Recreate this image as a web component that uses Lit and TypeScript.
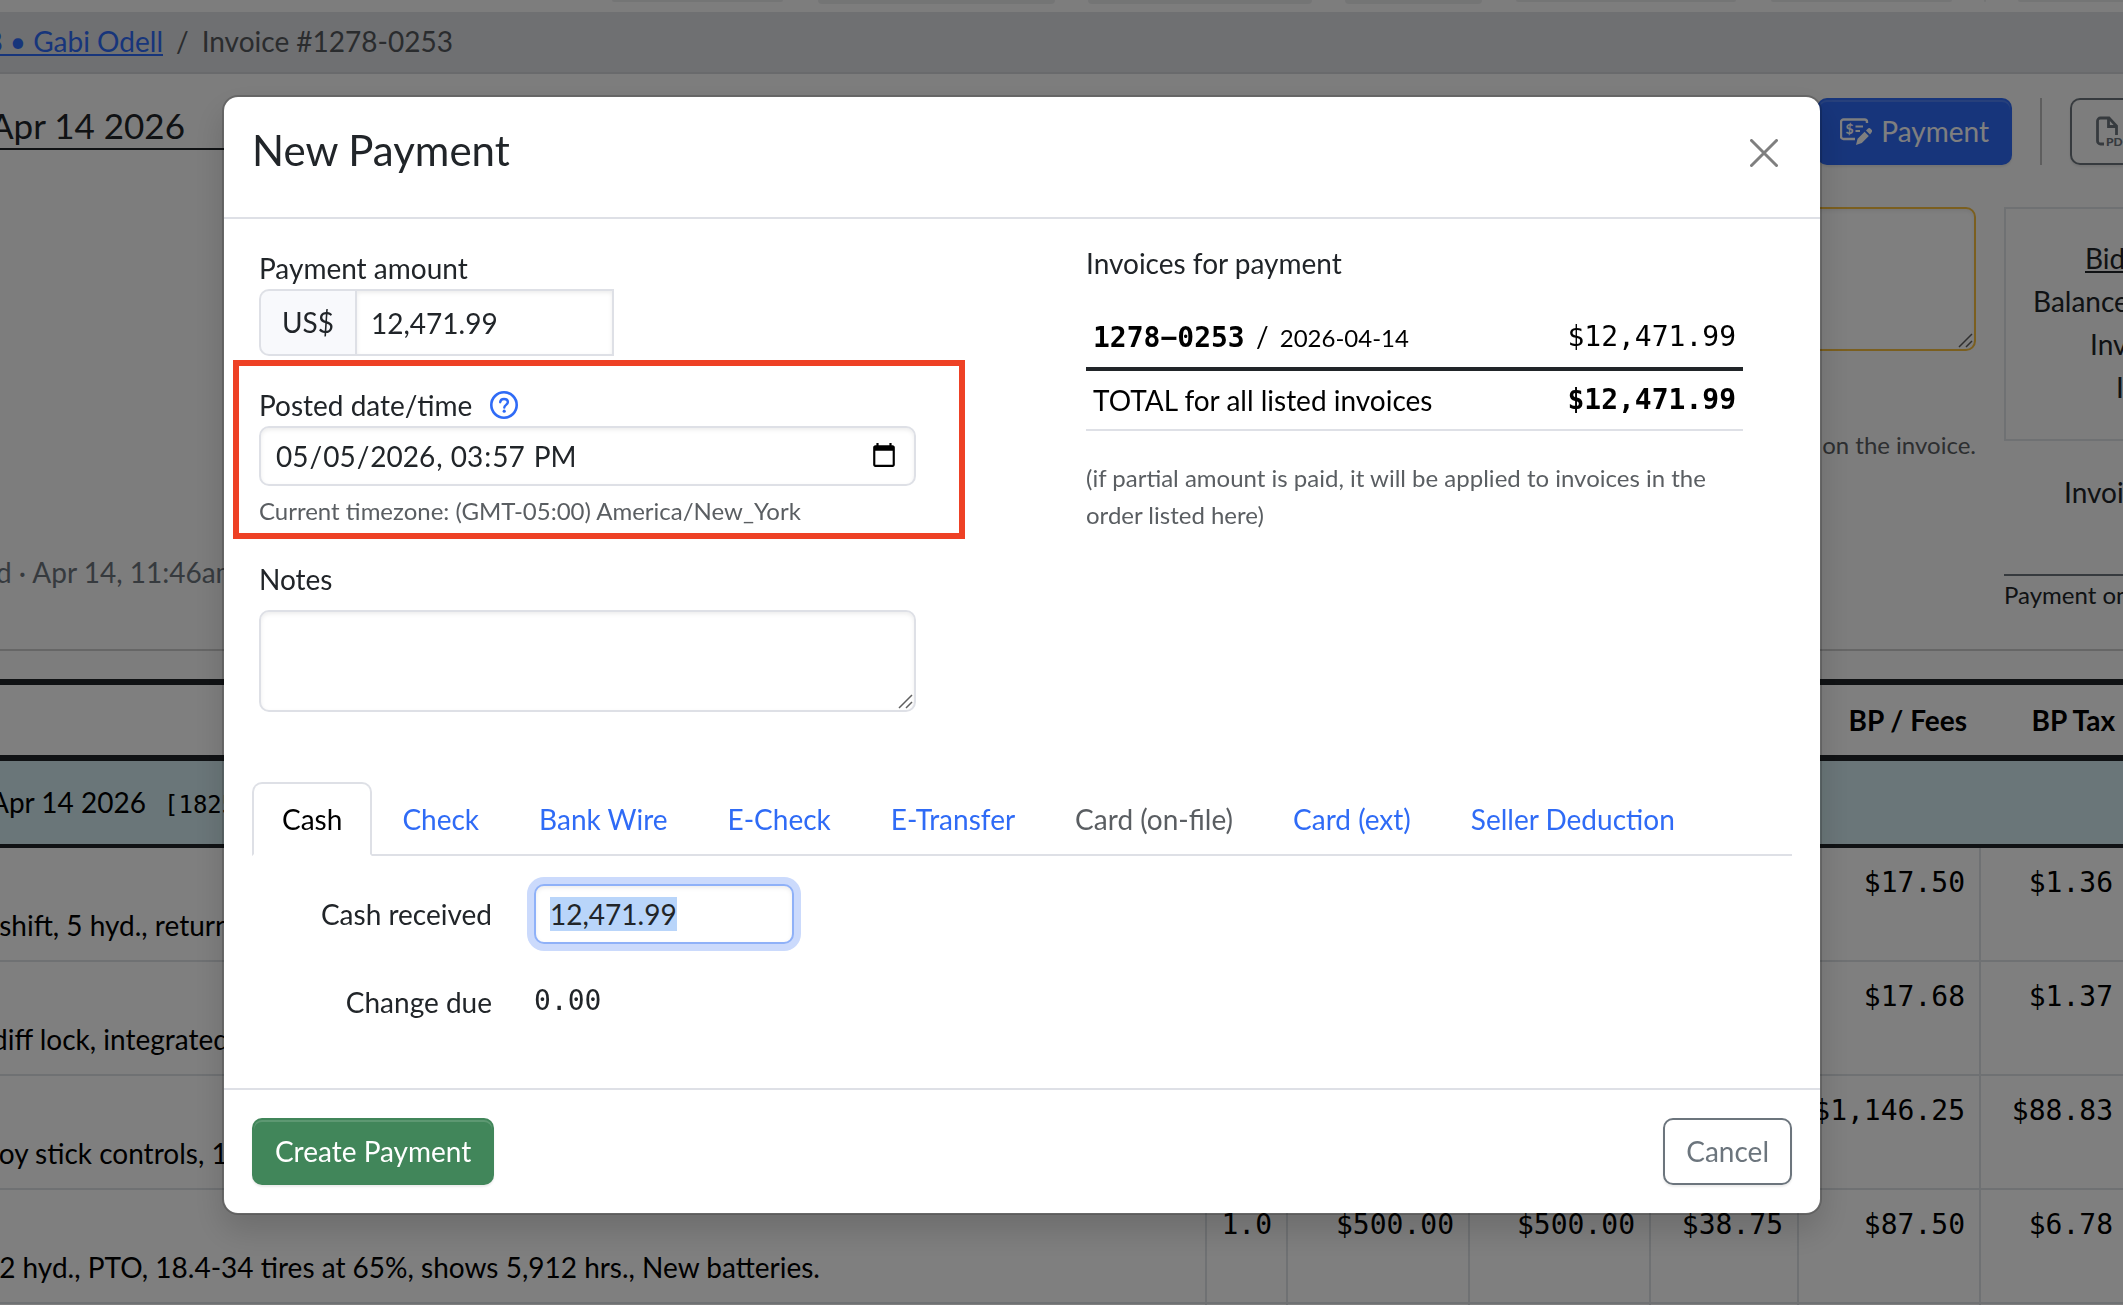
import { LitElement, html, css } from "lit";
import { customElement, query, state } from "lit/decorators.js";
import { classMap } from "lit/directives/class-map.js";
import { styleMap } from "lit/directives/style-map.js";

interface LotRow {
  description: string;
  cells: string[];
}

const LOTS: LotRow[] = [
  { description: "\u00a0shift, 5 hyd., return", cells: ["", "", "", "", "$17.50", "$1.36"] },
  { description: "diff lock, integrated", cells: ["", "", "", "", "$17.68", "$1.37"] },
  { description: "joy stick controls, 19", cells: ["", "", "", "", "$1,146.25", "$88.83"] },
  {
    description: "\u00a02 hyd., PTO, 18.4-34 tires at 65%, shows 5,912 hrs., New batteries.",
    cells: ["1.0", "$500.00", "$500.00", "$38.75", "$87.50", "$6.78"],
  },
  { description: "", cells: ["", "", "", "", "", ""] },
];

const SUMMARY = [
  { label: "Bid", inset: 79, link: true },
  { label: "Balance", inset: 27, link: false },
  { label: "Inv", inset: 84, link: false },
  { label: "I", inset: 110, link: false },
];

const TOOLBAR = [
  { gap: 612, width: 171, height: 2 },
  { gap: 35, width: 237, height: 4 },
  { gap: 33, width: 224, height: 4 },
  { gap: 33, width: 137, height: 4 },
  { gap: 34, width: 220, height: 2 },
  { gap: 35, width: 181, height: 2 },
  { gap: 32, width: 2, height: 2 },
  { gap: 32, width: 120, height: 2 },
];

const METHODS = [
  { name: "Cash" },
  { name: "Check" },
  { name: "Bank Wire" },
  { name: "E-Check" },
  { name: "E-Transfer" },
  { name: "Card (on-file)", disabled: true },
  { name: "Card (ext)" },
  { name: "Seller Deduction" },
];

const base = css`
  * {
    box-sizing: border-box;
  }
  button,
  input,
  textarea {
    font: inherit;
    color: inherit;
    margin: 0;
  }
  button {
    cursor: pointer;
  }
  svg {
    flex: none;
  }
  .btn {
    display: inline-flex;
    align-items: center;
    gap: 9px;
    padding: 11px 21px;
    line-height: 41px;
    border: 2px solid transparent;
    border-radius: 10px;
    white-space: nowrap;
  }
  .solid {
    color: #fff;
    box-shadow: inset 0 2px 0 rgba(255, 255, 255, 0.15), 0 2px 2px rgba(0, 0, 0, 0.075);
  }
  .outline {
    background: transparent;
    color: #6c757d;
    border-color: #6c757d;
    box-shadow: 0 2px 2px rgba(0, 0, 0, 0.075);
  }
  .mono {
    font-family: "DejaVu Sans Mono", "Liberation Mono", monospace;
  }
  .area {
    position: relative;
    display: block;
  }
  .area textarea {
    display: block;
    width: 100%;
    resize: none;
    outline: none;
    background: #fff;
    border: 2px solid #dee2e6;
    border-radius: 10px;
    padding: 7px 14px;
    box-shadow: inset 0 2px 4px rgba(0, 0, 0, 0.075);
  }
  .grip {
    position: absolute;
    right: 3px;
    bottom: 3px;
    width: 16px;
    height: 16px;
    pointer-events: none;
  }
`;

const grip = html`<svg class="grip" viewBox="0 0 16 16" aria-hidden="true">
  <path d="M2 15 15 2M9 15l6-6" fill="none" stroke="#5f5f5f" stroke-width="1.5" />
</svg>`;

@customElement("invoice-page")
export class InvoicePage extends LitElement {
  static styles = [
    base,
    css`
      :host {
        display: block;
        background: #fafafa;
      }
      .toolbar {
        display: flex;
        align-items: flex-start;
        height: 12px;
        overflow: hidden;
      }
      .tool {
        flex: none;
        background: #e9eaeb;
        border-radius: 0 0 8px 8px;
      }
      .crumbs {
        display: flex;
        gap: 13px;
        height: 62px;
        line-height: 42px;
        padding: 8px 0;
        background: #dee0e4;
        border-bottom: 2px solid #d2d4d8;
        color: #55585c;
      }
      .crumbs a {
        display: flex;
        justify-content: flex-end;
        flex: 0 0 163px;
        overflow: hidden;
        white-space: nowrap;
        color: #2f6bf6;
      }
      .head {
        padding: 24px 0 36px;
        border-bottom: 2px solid #cdcdcd;
        overflow: hidden;
      }
      .title-row {
        display: flex;
        align-items: flex-start;
        justify-content: space-between;
      }
      .date {
        flex: 0 1 600px;
        margin: 0;
        padding-top: 4px;
        font-size: 35px;
        font-weight: 400;
        line-height: 46px;
        border-bottom: 2px solid #212529;
        text-indent: -10px;
      }
      .actions {
        display: flex;
        gap: 28px;
        flex: none;
      }
      .primary {
        background: #2f6bf6;
      }
      .rule {
        width: 2px;
        background: #bcbcbc;
      }
      .pdf {
        width: 53px;
        padding-left: 24px;
        padding-right: 0;
        border-right: 0;
        border-radius: 10px 0 0 10px;
        overflow: hidden;
      }
      .info {
        display: flex;
        gap: 28px;
        margin-top: 42px;
      }
      .status {
        flex: 1;
        align-self: flex-end;
        padding-bottom: 20px;
        line-height: 42px;
        color: #6c757d;
        text-indent: -4px;
      }
      .memo {
        flex: 0 1 600px;
      }
      .memo textarea {
        height: 144px;
        border-color: #f6be3e;
      }
      .memo p {
        margin: 75px 0 0;
        font-size: 24px;
        line-height: 37px;
        text-align: right;
        color: #5a5e62;
      }
      .side {
        flex: 0 0 119px;
        overflow: hidden;
        white-space: nowrap;
      }
      .panel {
        padding: 28px 0 30px;
        border: 2px solid #dee2e6;
        border-right: 0;
        line-height: 43px;
      }
      .panel a {
        color: inherit;
      }
      .invoiced {
        margin-top: 30px;
        padding-left: 60px;
        line-height: 42px;
      }
      .order {
        margin-top: 61px;
        border-top: 2px solid #6c757d;
        font-size: 24px;
        line-height: 37px;
      }
      .lots {
        width: calc(100% + 6px);
        margin-top: 28px;
        table-layout: fixed;
        border-spacing: 0;
        line-height: 42px;
        color: #000;
        background: #fff;
      }
      th,
      td {
        padding: 14px 14px 14px 0;
        text-align: right;
        vertical-align: top;
        white-space: nowrap;
      }
      thead th {
        height: 82px;
        font-weight: 700;
        border-top: 6px solid #212529;
        border-bottom: 6px solid #212529;
      }
      .band td {
        height: 87px;
        padding: 20px 0;
        text-align: left;
        text-indent: -10px;
        background: #d5edf3;
        border-bottom: 4px solid #212529;
      }
      .band .mono {
        font-size: 24px;
        line-height: 24px;
        margin-left: 18px;
      }
      .lot td {
        height: 114px;
        border-right: 2px solid #dee2e6;
        border-bottom: 2px solid #dee2e6;
      }
      .lot .text {
        padding-top: 56px;
        text-align: left;
        text-indent: -8px;
      }
      .c-qty {
        width: 81px;
      }
      .c-price {
        width: 182px;
      }
      .c-total {
        width: 181px;
      }
      .c-tax {
        width: 148px;
      }
    `,
  ];

  render() {
    return html`
      <div class="toolbar">
        ${TOOLBAR.map(
          (t) => html`<span
            class="tool"
            style=${styleMap({ marginLeft: `${t.gap}px`, width: `${t.width}px`, height: `${t.height}px` })}
          ></span>`
        )}
      </div>
      <nav class="crumbs" aria-label="Breadcrumb">
        <a href="#"><span>8 • Gabi Odell</span></a><span>/</span><span>Invoice #1278-0253</span>
      </nav>
      <section class="head">
        <div class="title-row">
          <h1 class="date">Apr 14 2026</h1>
          <div class="actions">
            <button class="btn solid primary" type="button">
              <svg width="32" height="28" viewBox="0 0 32 28" fill="none" stroke="#fff" aria-hidden="true">
                <path d="M27 5V4a2.500 2.500 0 0 0-2.500-2.500h-21A2.500 2.500 0 0 0 1 4v14.500A2.500 2.500 0 0 0 3.500 21H15" stroke-width="2.400" />
                <path d="M15.500 8.500H23M15.500 13H20" stroke-width="2" />
                <path d="M16 27l1.600-6.200 7-7 4.200 4.200-7 7L16 27z" fill="#fff" stroke="none" />
                <path d="M26 12.400l1.800-1.600a2 2 0 0 1 2.800 0l.9.900a2 2 0 0 1 0 2.800L30 16.400z" fill="#fff" stroke="none" />
                <text x="5.500" y="16" font-size="14" font-weight="700" fill="#fff" stroke="none">$</text>
              </svg>
              Payment
            </button>
            <span class="rule"></span>
            <button class="btn outline pdf" type="button" aria-label="PDF">
              <svg width="36" height="32" viewBox="0 0 36 32" fill="none" stroke="#6c757d" aria-hidden="true">
                <path d="M8 28H4.500A3 3 0 0 1 1.500 25V5A3 3 0 0 1 4.500 2H13l7.500 8v9" stroke-width="2.800" />
                <path d="M12.500 2.500V10.500H20" stroke-width="2.800" />
                <text x="10" y="30" font-size="12" font-weight="900" fill="#6c757d" stroke="none">PDF</text>
              </svg>
            </button>
          </div>
        </div>
        <div class="info">
          <div class="status">d · Apr 14, 11:46am</div>
          <div class="memo">
            <div class="area"><textarea aria-label="Invoice memo"></textarea>${grip}</div>
            <p>on the invoice.</p>
          </div>
          <div class="side">
            <div class="panel">
              ${SUMMARY.map(
                (s) => html`<div style=${styleMap({ paddingLeft: `${s.inset}px` })}>
                  ${s.link ? html`<a href="#">${s.label}</a>` : s.label}
                </div>`
              )}
            </div>
            <div class="invoiced">Invoi</div>
            <div class="order">Payment on</div>
          </div>
        </div>
      </section>
      <table class="lots">
        <colgroup>
          <col />
          <col class="c-qty" />
          <col class="c-price" />
          <col class="c-total" />
          <col class="c-tax" />
          <col class="c-price" />
          <col class="c-tax" />
        </colgroup>
        <thead>
          <tr>
            <th></th>
            <th></th>
            <th></th>
            <th></th>
            <th></th>
            <th>BP / Fees</th>
            <th>BP Tax</th>
          </tr>
        </thead>
        <tbody>
          <tr class="band">
            <td colspan="7">Apr 14 2026<span class="mono">[1825</span></td>
          </tr>
          ${LOTS.map(
            (lot) => html`<tr class="lot">
              <td class="text">${lot.description}</td>
              ${lot.cells.map((c) => html`<td class="mono">${c}</td>`)}
            </tr>`
          )}
        </tbody>
      </table>
    `;
  }
}

@customElement("payment-dialog")
export class PaymentDialog extends LitElement {
  @state() private method = "Cash";
  @query("#received") private received!: HTMLInputElement;

  static styles = [
    base,
    css`
      :host {
        display: block;
        width: 100%;
        max-width: 1600px;
        color: #212529;
      }
      .dialog {
        background: #fff;
        background-clip: padding-box;
        border: 2px solid rgba(0, 0, 0, 0.175);
        border-radius: 16px;
        box-shadow: 0 16px 32px rgba(0, 0, 0, 0.15);
      }
      header,
      footer {
        display: flex;
        align-items: center;
        justify-content: space-between;
        padding: 28px;
      }
      header {
        align-items: flex-start;
        height: 122px;
        border-bottom: 2px solid #dee0e6;
      }
      footer {
        border-top: 2px solid #dee0e6;
      }
      h2 {
        margin: 0;
        font-size: 42px;
        font-weight: 400;
        line-height: 50px;
      }
      .close {
        display: flex;
        padding: 14px;
        border: 0;
        background: none;
      }
      .body {
        padding: 23px 28px 28px;
      }
      .columns {
        display: grid;
        grid-template-columns: 1fr 1fr;
        gap: 170px;
        padding: 0 49px 0 7px;
      }
      .fields {
        padding-top: 5px;
      }
      .label {
        display: block;
        line-height: 42px;
      }
      .label-row {
        display: flex;
        align-items: center;
        gap: 18px;
        margin-top: 28px;
      }
      .help {
        display: flex;
        padding: 0;
        border: 0;
        background: none;
      }
      .control {
        display: block;
        height: 60px;
        line-height: 42px;
        padding: 7px 14px;
        background: #fff;
        border: 2px solid #dee0e6;
        border-radius: 10px;
        outline: none;
        box-shadow: inset 0 2px 4px rgba(0, 0, 0, 0.075);
      }
      .group {
        display: flex;
        width: 355px;
      }
      .addon {
        padding: 11px 21px;
        line-height: 41px;
        background: #f8f9fc;
        border: 2px solid #dee0e6;
        border-right: 0;
        border-radius: 10px 0 0 10px;
      }
      .group .control {
        flex: 1;
        min-width: 0;
        height: 67px;
        border-radius: 0;
      }
      .when {
        width: 100%;
      }
      .hint {
        margin: 6px 0 0;
        font-size: 24px;
        line-height: 38px;
        color: #5a5e62;
      }
      .stamp {
        position: relative;
      }
      .marker {
        position: absolute;
        inset: -24px -49px -9px -26px;
        border: 6px solid #ee4125;
        pointer-events: none;
      }
      .notes {
        margin: 28px 0 10px;
      }
      .area textarea {
        height: 102px;
        border-color: #dee0e6;
      }
      .due {
        width: 100%;
        margin-top: 23px;
        border-spacing: 0;
        line-height: 42px;
        color: #000;
      }
      .due td,
      .due th {
        padding: 8px 7px;
        font-weight: 400;
        text-align: left;
        border-bottom: 4px solid #212529;
      }
      .due td {
        text-align: right;
      }
      .due .total th,
      .due .total td {
        border-bottom: 2px solid #dee0e6;
      }
      .due .small {
        font-size: 24px;
      }
      .due .slash {
        margin: 0 4px;
      }
      .due .mono {
        white-space: nowrap;
      }
      .partial {
        margin: 28px 0 0;
        font-size: 24px;
        line-height: 37px;
        color: #5a5e62;
      }
      b,
      .due .total .mono {
        font-weight: 700;
      }
      .tabs {
        display: flex;
        margin-top: 70px;
        border-bottom: 2px solid #dee0e6;
      }
      .tab {
        margin-bottom: -2px;
        padding: 14px 28px;
        line-height: 42px;
        color: #2f6bf6;
        background: none;
        border: 2px solid transparent;
        border-radius: 10px 10px 0 0;
        white-space: nowrap;
      }
      .tab.active {
        color: #000;
        background: #fff;
        border-color: #dee0e6 #dee0e6 #fff;
      }
      .tab:disabled {
        color: #5a5e62;
        cursor: default;
      }
      .cash {
        display: grid;
        grid-template-columns: 240px 1fr;
        column-gap: 42px;
        row-gap: 28px;
        padding: 28px 0;
      }
      .cash .label {
        padding: 9px 0;
        text-align: right;
      }
      .cash .control {
        width: 260px;
      }
      .focused {
        border-color: #8fb1f8;
        box-shadow: inset 0 2px 4px rgba(0, 0, 0, 0.075), 0 0 0 7px #cbdafc;
      }
      .focused::selection {
        background: #b9d5fa;
        color: #212529;
      }
      .change {
        padding: 8px 0;
        line-height: 42px;
      }
      .success {
        background: #41865a;
      }
    `,
  ];

  firstUpdated() {
    this.received.focus();
    this.received.select();
  }

  render() {
    return html`
      <div class="dialog" role="dialog" aria-labelledby="title">
        <header>
          <h2 id="title">New Payment</h2>
          <button class="close" type="button" aria-label="Close">
            <svg width="28" height="28" viewBox="0 0 28 28" aria-hidden="true">
              <path d="M1.500 1.500l25 25M26.500 1.500l-25 25" stroke="#7f7f7f" stroke-width="3" stroke-linecap="round" />
            </svg>
          </button>
        </header>
        <div class="body">
          <div class="columns">
            <div class="fields">
              <label class="label" for="amount">Payment amount</label>
              <div class="group">
                <span class="addon">US$</span>
                <input class="control" id="amount" type="text" .value=${"12,471.99"} />
              </div>
              <div class="stamp">
                <div class="label-row">
                  <label class="label" for="when">Posted date/time</label>
                  <button class="help" type="button" aria-label="Help">
                    <svg width="28" height="28" viewBox="0 0 28 28" fill="none" stroke="#2f6bf6" aria-hidden="true">
                      <circle cx="14" cy="14" r="12.700" stroke-width="2.600" />
                      <path d="M10.200 11.200c.2-2.200 1.700-3.200 3.800-3.200 2.300 0 3.900 1.200 3.900 3.100 0 2.700-3.600 2.800-3.600 5.400" stroke-width="2.400" stroke-linecap="round" />
                      <circle cx="14.200" cy="20.200" r="1.600" fill="#2f6bf6" stroke="none" />
                    </svg>
                  </button>
                </div>
                <input class="control when" id="when" type="datetime-local" .value=${"2026-05-05T15:57"} />
                <p class="hint">Current timezone: (GMT-05:00) America/New_York</p>
                <div class="marker"></div>
              </div>
              <label class="label notes" for="notes">Notes</label>
              <div class="area"><textarea id="notes"></textarea>${grip}</div>
            </div>
            <div>
              <div class="label">Invoices for payment</div>
              <table class="due">
                <tbody>
                  <tr>
                    <th scope="row"><b class="mono">1278−0253</b> <span class="slash">/</span> <span class="small">2026-04-14</span></th>
                    <td class="mono">$12,471.99</td>
                  </tr>
                  <tr class="total">
                    <th scope="row">TOTAL for all listed invoices</th>
                    <td class="mono">$12,471.99</td>
                  </tr>
                </tbody>
              </table>
              <p class="partial">(if partial amount is paid, it will be applied to invoices in the order listed here)</p>
            </div>
          </div>
          <div class="tabs" role="tablist">
            ${METHODS.map(
              (m) => html`<button
                type="button"
                role="tab"
                class=${classMap({ tab: true, active: m.name === this.method })}
                aria-selected=${m.name === this.method ? "true" : "false"}
                ?disabled=${m.disabled ?? false}
                @click=${() => (this.method = m.name)}
              >
                ${m.name}
              </button>`
            )}
          </div>
          <div class="cash">
            <label class="label" for="received">Cash received</label>
            <input class="control focused" id="received" type="text" .value=${"12,471.99"} />
            <span class="label">Change due</span>
            <output class="change mono" for="received">0.00</output>
          </div>
        </div>
        <footer>
          <button class="btn solid success" type="button">Create Payment</button>
          <button class="btn outline" type="button">Cancel</button>
        </footer>
      </div>
    `;
  }
}

@customElement("app-root")
export class AppRoot extends LitElement {
  static styles = css`
    :host {
      display: block;
      height: 100vh;
      overflow: hidden;
      font-family: Lato, "Open Sans", sans-serif;
      font-size: 28px;
      color: #212529;
    }
    .backdrop {
      position: fixed;
      inset: 0;
      display: flex;
      align-items: flex-start;
      justify-content: center;
      padding: 95px 79px 0 0;
      background: rgba(0, 0, 0, 0.5);
      overflow: hidden;
    }
  `;

  render() {
    return html`
      <invoice-page></invoice-page>
      <div class="backdrop"><payment-dialog></payment-dialog></div>
    `;
  }
}
